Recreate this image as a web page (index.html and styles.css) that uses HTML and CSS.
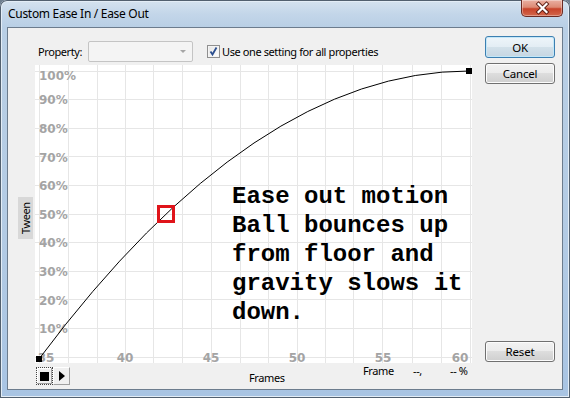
FILE: index.html
```html
<!DOCTYPE html>
<html>
<head>
<meta charset="utf-8">
<link rel="stylesheet" href="styles.css">
</head>
<body>
<div class="window">
  <div class="titlebar">
    <span class="title">Custom Ease In / Ease Out</span>
    <div class="close">
      <svg width="42" height="17" viewBox="0 0 42 17">
        <path d="M17.5 5 L25.5 13 M25.5 5 L17.5 13" stroke="#5a1c12" stroke-width="4" stroke-linecap="square"/>
        <path d="M17.5 5 L25.5 13 M25.5 5 L17.5 13" stroke="#ffffff" stroke-width="2.2" stroke-linecap="square"/>
      </svg>
    </div>
  </div>
  <div class="client">
    <div class="main">
      <div class="toprow">
        <span class="prop-label">Property:</span>
        <div class="combo"><span class="combo-arrow"></span></div>
        <span class="check">
          <svg width="11" height="11" viewBox="0 0 11 11"><path d="M2.5 5.5 L4.5 8.5 L8.5 1.5" stroke="#2c4f8f" stroke-width="1.8" fill="none"/></svg>
        </span>
        <span class="check-label">Use one setting for all properties</span>
      </div>
      <div class="chartrow">
        <div class="tween"><span>Tween</span></div>
        <div class="plot">
          <svg class="graph" width="437" height="298" viewBox="0 0 437 298">
            <g class="grid">
              <path d="M4.5 0V298M33.5 0V298M62.5 0V298M90.5 0V298M118.5 0V298M147.5 0V298M176.5 0V298M205.5 0V298M233.5 0V298M262.5 0V298M290.5 0V298M318.5 0V298M347.5 0V298M377.5 0V298M406.5 0V298M435.5 0V298"/>
              <path d="M0 6.5H437M0 34.5H437M0 63.5H437M0 91.5H437M0 120.5H437M0 149.5H437M0 177.5H437M0 206.5H437M0 234.5H437M0 263.5H437M0 292.5H437"/>
            </g>
            <g class="axis">
              <text x="4" y="14.5">100%</text>
              <text x="4" y="39">90%</text>
              <text x="4" y="68">80%</text>
              <text x="4" y="96.5">70%</text>
              <text x="4" y="125">60%</text>
              <text x="4" y="153.5">50%</text>
              <text x="4" y="182">40%</text>
              <text x="4" y="211">30%</text>
              <text x="4" y="239.5">20%</text>
              <text x="4" y="268">10%</text>
              <text x="11" y="296.5" text-anchor="middle">35</text>
              <text x="90" y="296.5" text-anchor="middle">40</text>
              <text x="176" y="296.5" text-anchor="middle">45</text>
              <text x="262" y="296.5" text-anchor="middle">50</text>
              <text x="348" y="296.5" text-anchor="middle">55</text>
              <text x="425" y="296.5" text-anchor="middle">60</text>
            </g>
            <path class="curve" d="M4 294 Q219 6 434 6"/>
            <rect x="1" y="291" width="6" height="6" fill="#000"/>
            <rect x="431" y="3" width="6" height="6" fill="#000"/>
            <rect x="123.5" y="141.5" width="15" height="15" fill="none" stroke="#e0141a" stroke-width="3"/>
          </svg>
          <div class="note">Ease out motion<br>Ball bounces up<br>from floor and<br>gravity slows it<br>down.</div>
        </div>
      </div>
      <div class="bottomrow">
        <div class="transport">
          <span class="tbtn stop"><span class="stop-sq"></span></span>
          <span class="tbtn play"><span class="play-tri"></span></span>
        </div>
        <span class="frames">Frames</span>
        <span class="frame">Frame</span>
        <span class="fval">--,</span>
        <span class="pval">-- %</span>
      </div>
    </div>
    <div class="side">
      <div class="btn ok">OK</div>
      <div class="btn cancel">Cancel</div>
      <div class="btn reset">Reset</div>
    </div>
  </div>
</div>
</body>
</html>
```
FILE: styles.css
```css
* { box-sizing: border-box; }
html, body { margin: 0; padding: 0; }
body {
  width: 570px;
  height: 398px;
  overflow: hidden;
  font-family: "Noto Sans", "Liberation Sans", sans-serif;
  font-size: 11px;
  letter-spacing: -0.4px;
  color: #000;
  background: #6f7f8f;
}
.window {
  width: 570px;
  height: 398px;
  border-radius: 7px 7px 0 0;
  background: linear-gradient(180deg, #d6e3ef 0px, #c3d6e9 14px, #b9cfe5 27px, #b3cbe4 60%, #a8c4e3 100%);
  box-shadow: inset 0 0 0 1px #52606f, inset 0 0 0 2px #e3edf6;
  display: flex;
  flex-direction: column;
  padding: 0 7px 8px 7px;
}
.titlebar {
  height: 27px;
  display: flex;
  justify-content: space-between;
  align-items: flex-start;
}
.title {
  font-size: 12px;
  letter-spacing: -0.3px;
  line-height: 27px;
  padding-left: 1px;
  color: #000;
}
.close {
  width: 42px;
  height: 17px;
  margin-right: -7px;
  position: relative;
  left: -7px;
  border: 1px solid #6b2a22;
  border-top: none;
  border-radius: 0 0 5px 5px;
  background: linear-gradient(180deg, #eab0a2 0%, #dd8a74 45%, #c8432a 55%, #d2674b 100%);
  box-shadow: inset 0 0 0 1px rgba(255,255,255,0.35);
}
.close svg { display: block; margin: -1px 0 0 -1px; }
.client {
  flex: 1;
  display: flex;
  background: #f0f0f0;
  border: 1px solid #6c7c8d;
}
.main {
  width: 464px;
  padding-left: 10px;
  display: flex;
  flex-direction: column;
}
.toprow {
  margin-top: 13px;
  height: 21px;
  padding-left: 20px;
  display: flex;
  align-items: center;
}
.prop-label { width: 50px; }
.combo {
  width: 105px;
  height: 21px;
  border: 1px solid #c4c4c4;
  border-radius: 2px;
  background: #f4f4f4;
  position: relative;
}
.combo-arrow {
  position: absolute;
  right: 6px;
  top: 8px;
  width: 0;
  height: 0;
  border-left: 3px solid transparent;
  border-right: 3px solid transparent;
  border-top: 3px solid #a6a6a6;
}
.check {
  margin-left: 14px;
  width: 13px;
  height: 13px;
  border: 1px solid #8f8f8f;
  background: linear-gradient(135deg, #e4e4e4, #ffffff);
  box-shadow: inset 0 0 0 1px #f4f4f4;
  display: flex;
}
.check svg { display: block; margin: 0; }
.check-label { margin-left: 2px; }
.chartrow {
  margin-top: 3px;
  height: 298px;
  display: flex;
}
.tween {
  width: 17px;
  align-self: flex-start;
  margin-top: 132px;
}
.tween span {
  display: block;
  width: 15px;
  height: 42px;
  background: #d8d8d8;
  writing-mode: vertical-rl;
  transform: rotate(180deg);
  text-align: center;
  line-height: 15px;
  font-size: 11px;
}
.plot {
  width: 437px;
  height: 298px;
  background: #fff;
  position: relative;
}
.graph { display: block; }
.grid path { stroke: #e6e6e6; stroke-width: 1; fill: none; shape-rendering: crispEdges; }
.axis text {
  font-family: "DejaVu Sans", sans-serif;
  font-weight: bold;
  font-size: 12px;
  letter-spacing: 0;
  fill: #a4a4a4;
}
.curve { fill: none; stroke: #000; stroke-width: 1; }
.note {
  position: absolute;
  left: 197px;
  top: 117px;
  font-family: "Liberation Mono", "Courier New", monospace;
  font-weight: bold;
  font-size: 24px;
  letter-spacing: 0;
  line-height: 29px;
  white-space: nowrap;
  color: #000;
}
.bottomrow {
  height: 26px;
  display: flex;
  align-items: flex-start;
}
.transport {
  margin-left: 18px;
  margin-top: 4px;
  display: flex;
}
.tbtn {
  width: 17px;
  height: 18px;
  display: flex;
  align-items: center;
  justify-content: center;
  background: #f0f0f0;
}
.stop {
  border: 1px dotted #444;
  box-shadow: inset -1px -1px 0 #a0a0a0, inset 1px 1px 0 #fff;
}
.stop-sq { width: 9px; height: 9px; background: #000; }
.play {
  border-right: 1px solid #a0a0a0;
  border-bottom: 1px solid #a0a0a0;
  border-top: 1px solid #fff;
  border-left: 1px solid #fff;
}
.play-tri {
  width: 0; height: 0;
  margin-left: 1px;
  border-top: 5px solid transparent;
  border-bottom: 5px solid transparent;
  border-left: 6px solid #000;
}
.frames { margin-left: 179px; width: 114px; margin-top: 8px; line-height: 14px; }
.frame { width: 50px; margin-top: 1px; line-height: 14px; }
.fval { width: 37px; margin-top: 1px; line-height: 14px; }
.pval { margin-top: 1px; line-height: 14px; }
.side {
  margin-left: 13px;
  width: 70px;
  display: flex;
  flex-direction: column;
}
.btn {
  height: 21px;
  border: 1px solid #707070;
  border-radius: 3px;
  background: linear-gradient(180deg, #f2f2f2 0%, #ebebeb 50%, #dddddd 50%, #cfcfcf 100%);
  box-shadow: inset 0 0 0 1px #fcfcfc;
  display: flex;
  align-items: center;
  justify-content: center;
  font-size: 11.5px;
  letter-spacing: -0.2px;
}
.ok {
  margin-top: 8px;
  height: 22px;
  border-color: #3c7fb1;
  background: linear-gradient(180deg, #eef5fa 0%, #e3edf4 50%, #d3e1ea 50%, #c6d6e2 100%);
  box-shadow: inset 0 0 0 1px #c3e7f8;
}
.cancel { margin-top: 5px; }
.reset { margin-top: auto; margin-bottom: 27px; }
```
